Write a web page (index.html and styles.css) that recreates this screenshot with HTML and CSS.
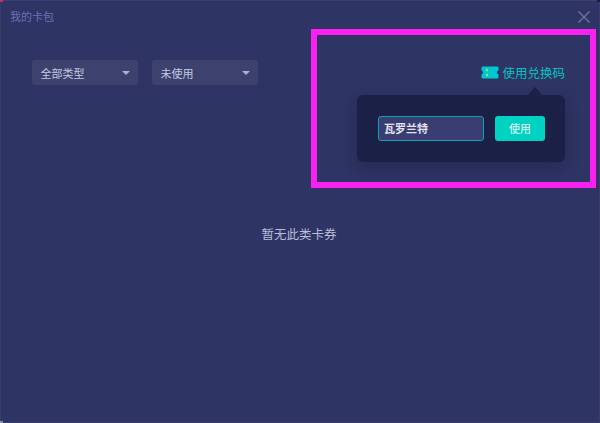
FILE: index.html
```html
<!DOCTYPE html>
<html lang="zh-CN">
<head>
<meta charset="utf-8">
<title>我的卡包</title>
<link rel="stylesheet" href="styles.css">
</head>
<body>
<div class="window">
  <header class="titlebar">
    <span class="title">我的卡包</span>
    <svg class="close" width="12" height="12" viewBox="0 0 12 12"><path d="M0.5 0.5L11.5 11.5M11.5 0.5L0.5 11.5" stroke="#74789a" stroke-width="1.2" fill="none"/></svg>
  </header>
  <div class="toolbar">
    <div class="select"><span>全部类型</span><i class="caret"></i></div>
    <div class="select"><span>未使用</span><i class="caret"></i></div>
    <div class="redeem">
      <svg class="ticket" width="18" height="13" viewBox="0 0 18 13"><path d="M2 0.5H16C17 0.5 17.5 1 17.5 2V4.6C16.4 5 16 5.7 16 6.5C16 7.3 16.4 8 17.5 8.4V11C17.5 12 17 12.5 16 12.5H2C1 12.5 0.5 12 0.5 11V8.4C1.6 8 2 7.3 2 6.5C2 5.7 1.6 5 0.5 4.6V2C0.5 1 1 0.5 2 0.5Z" fill="#00c6d0"/><path d="M6 2.8V5.3M6 7.7V10.2" stroke="#d4f23c" stroke-width="1.3"/></svg>
      <span>使用兑换码</span>
      <div class="popover">
        <div class="field">瓦罗兰特</div>
        <div class="btn">使用</div>
      </div>
    </div>
  </div>
  <div class="empty">暂无此类卡券</div>
  <div class="highlight"></div>
  <i class="corner corner-tl"></i>
  <i class="corner corner-tr"></i>
  <i class="corner corner-bl"></i>
</div>
</body>
</html>
```
FILE: styles.css
```css
* { box-sizing: border-box; }
html, body { margin: 0; padding: 0; }
body {
  width: 600px;
  height: 423px;
  overflow: hidden;
  background: #2e3463;
  font-family: "Noto Sans CJK SC", "Liberation Sans", sans-serif;
}
.window {
  position: relative;
  width: 600px;
  height: 423px;
  border: 1px solid #383d6c;
  border-top-color: #3b4070;
  background: #2e3463;
}
.titlebar {
  height: 32px;
  padding: 8px 9px 0 9px;
  display: flex;
  justify-content: space-between;
  align-items: flex-start;
}
.title { font-size: 11px; line-height: 15px; color: #6b71b4; }
.close { margin-top: 2px; }
.toolbar {
  display: flex;
  padding: 27px 34px 0 30.5px;
  gap: 14px;
}
.select {
  width: 106px;
  height: 25px;
  padding: 0 8px 0 9px;
  border-radius: 3px;
  background: #3d416e;
  color: #c4c8e2;
  font-size: 11px;
  display: flex;
  align-items: center;
  justify-content: space-between;
}
.caret {
  width: 0;
  height: 0;
  border-left: 4px solid transparent;
  border-right: 4px solid transparent;
  border-top: 4px solid #aab0cf;
}
.redeem {
  position: relative;
  margin-left: auto;
  height: 25px;
  display: flex;
  align-items: center;
  gap: 3px;
  color: #06c3c3;
  font-size: 12.5px;
}
.popover {
  position: absolute;
  top: 35px;
  right: 0;
  width: 208px;
  height: 67px;
  padding: 21px 20px 0 21px;
  border-radius: 6px;
  background: #1a2046;
  box-shadow: 0 6px 14px rgba(20, 24, 60, 0.35);
  display: flex;
  justify-content: space-between;
  align-items: flex-start;
}
.popover::before {
  content: "";
  position: absolute;
  top: -8px;
  right: 23px;
  width: 0;
  height: 0;
  border-left: 7px solid transparent;
  border-right: 7px solid transparent;
  border-bottom: 8px solid #1a2046;
}
.field {
  width: 106px;
  height: 25px;
  padding-left: 5px;
  border: 1px solid #0aa5ad;
  border-radius: 3px;
  background: #3a3d72;
  color: #e2e4f2;
  font-size: 11px;
  font-weight: 700;
  line-height: 23px;
}
.btn {
  width: 50px;
  height: 25px;
  border-radius: 3px;
  background: #00d2c2;
  color: #f2fffd;
  font-size: 11px;
  line-height: 25px;
  text-align: center;
}
.empty {
  margin-top: 140px;
  margin-left: -2px;
  text-align: center;
  font-size: 12.5px;
  line-height: 17px;
  color: #b9bedb;
}
.highlight {
  position: absolute;
  left: 310px;
  top: 28px;
  width: 285px;
  height: 159px;
  border: 6px solid #fa20f0;
}
.corner {
  position: absolute;
  width: 3px;
  height: 2px;
}
.corner-tl { top: -1px; left: -1px; background: #c2334f; }
.corner-tr { top: -1px; right: -1px; background: #1c1d30; }
.corner-bl { bottom: -1px; left: -1px; background: #8d8fa6; }
```
